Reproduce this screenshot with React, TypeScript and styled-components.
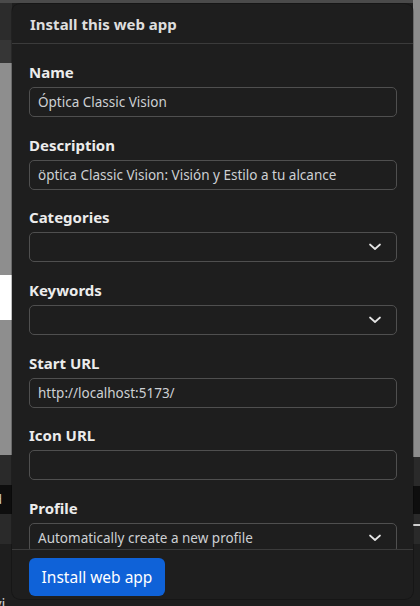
import React from "react";
import styled, { createGlobalStyle } from "styled-components";

const Global = createGlobalStyle`
  html, body { margin: 0; padding: 0; background: #1e1e1e; }
  body { font-family: "Noto Sans", "DejaVu Sans", sans-serif; }
  * { box-sizing: border-box; }
`;

const Page = styled.div`
  position: relative;
  width: 420px;
  height: 606px;
  overflow: hidden;
  display: flex;
  flex-direction: row;
  background: #1e1e1e;
`;

const Strip = styled.div<{ $w: number }>`
  width: ${(p) => p.$w}px;
  display: flex;
  flex-direction: column;
  flex: ${(p) => (p.$w ? "none" : "1")};
`;

const Band = styled.div<{ $h: number; $bg: string }>`
  height: ${(p) => p.$h}px;
  flex: none;
  background: ${(p) => p.$bg};
  color: #cfcfcf;
  font-size: 13px;
  line-height: ${(p) => p.$h}px;
  overflow: hidden;
  white-space: nowrap;
`;

const Fill = styled.div<{ $bg: string }>`
  flex: 1;
  background: ${(p) => p.$bg};
  color: #cfcfcf;
  font-size: 15px;
  display: flex;
  align-items: flex-end;
  overflow: hidden;
  white-space: nowrap;
`;

const BgText = styled.span`
  margin-left: -6px;
  line-height: 18px;
  margin-bottom: -6px;
`;

const Dialog = styled.div`
  position: absolute;
  left: 12px;
  top: 4px;
  width: 401px;
  height: 595px;
  background: #1e1e1e;
  border-radius: 8px;
  display: flex;
  flex-direction: column;
  overflow: hidden;
  box-shadow: 0 0 0 1px rgba(0, 0, 0, 0.25);
`;

const Header = styled.div`
  height: 40px;
  flex: none;
  display: flex;
  align-items: center;
  padding-left: 18px;
  border-bottom: 1px solid #3b3b3b;
`;

const Title = styled.h1`
  margin: 0;
  font-size: 15px;
  font-weight: 700;
  color: #dedede;
  line-height: 20px;
`;

const Body = styled.div`
  flex: 1;
  overflow: hidden;
  padding: 18px 16px 0 17px;
  display: flex;
  flex-direction: column;
  gap: 17.67px;
`;

const Field = styled.div`
  display: flex;
  flex-direction: column;
  gap: 5px;
  flex: none;
`;

const Label = styled.label`
  font-size: 15px;
  font-weight: 700;
  color: #ececec;
  line-height: 20px;
`;

const InputBox = styled.div`
  height: 30px;
  border: 1px solid #4f4f4f;
  border-radius: 5px;
  display: flex;
  align-items: center;
  padding: 0 15px 0 8px;
  font-size: 13.5px;
  color: #cdd0d3;
  white-space: nowrap;
  overflow: hidden;
`;

const Value = styled.span`
  flex: 1;
`;

const Footer = styled.div`
  flex: none;
  border-top: 1px solid #3b3b3b;
  padding: 8px 17px 3px;
`;

const Button = styled.button`
  width: 136px;
  height: 38px;
  border: none;
  border-radius: 6px;
  background: #0f62d8;
  color: #ffffff;
  font-family: inherit;
  font-size: 15.5px;
  padding: 0;
  cursor: pointer;
`;

const Chevron = () => (
  <svg width="12" height="8" viewBox="0 0 12 8" aria-hidden>
    <polyline
      points="1,1.5 6,6 11,1.5"
      fill="none"
      stroke="#e4e4e4"
      strokeWidth="1.7"
      strokeLinecap="round"
      strokeLinejoin="round"
    />
  </svg>
);

const fields: { label: string; value: string; select?: boolean }[] = [
  { label: "Name", value: "Óptica Classic Vision" },
  { label: "Description", value: "öptica Classic Vision: Visión y Estilo a tu alcance" },
  { label: "Categories", value: "", select: true },
  { label: "Keywords", value: "", select: true },
  { label: "Start URL", value: "http://localhost:5173/" },
  { label: "Icon URL", value: "" },
  { label: "Profile", value: "Automatically create a new profile", select: true },
];

export default function App() {
  return (
    <>
      <Global />
      <Page>
        <Strip $w={12}>
          <Band $h={3} $bg="#4a4a4a" />
          <Band $h={37} $bg="#2c2c2c" />
          <Band $h={23} $bg="#363636" />
          <Band $h={212} $bg="#8e8e8e" />
          <Band $h={45} $bg="#ffffff" />
          <Band $h={135} $bg="#8e8e8e" />
          <Band $h={30} $bg="#2a2a2a" />
          <Band $h={29} $bg="#0e0e0e">
            <BgText>d</BgText>
          </Band>
          <Band $h={30} $bg="#2a2a2a" />
          <Fill $bg="#1e1e1e">
            <BgText>vi</BgText>
          </Fill>
        </Strip>
        <Strip $w={0}>
          <Band $h={3} $bg="#4a4a4a" />
          <Fill $bg="#1e1e1e" />
        </Strip>
        <Strip $w={7}>
          <Band $h={457} $bg="#8c8c8c" />
          <Band $h={29} $bg="#2a2a2a" />
          <Band $h={28} $bg="#0e0e0e" />
          <Band $h={10} $bg="#2a2a2a" />
          <Band $h={2} $bg="#cfcfcf" />
          <Band $h={18} $bg="#2a2a2a" />
          <Fill $bg="#1e1e1e" />
        </Strip>

        <Dialog role="dialog">
          <Header>
            <Title>Install this web app</Title>
          </Header>
          <Body>
            {fields.map((f) => (
              <Field key={f.label}>
                <Label>{f.label}</Label>
                <InputBox>
                  <Value>{f.value}</Value>
                  {f.select && <Chevron />}
                </InputBox>
              </Field>
            ))}
          </Body>
          <Footer>
            <Button>Install web app</Button>
          </Footer>
        </Dialog>
      </Page>
    </>
  );
}
